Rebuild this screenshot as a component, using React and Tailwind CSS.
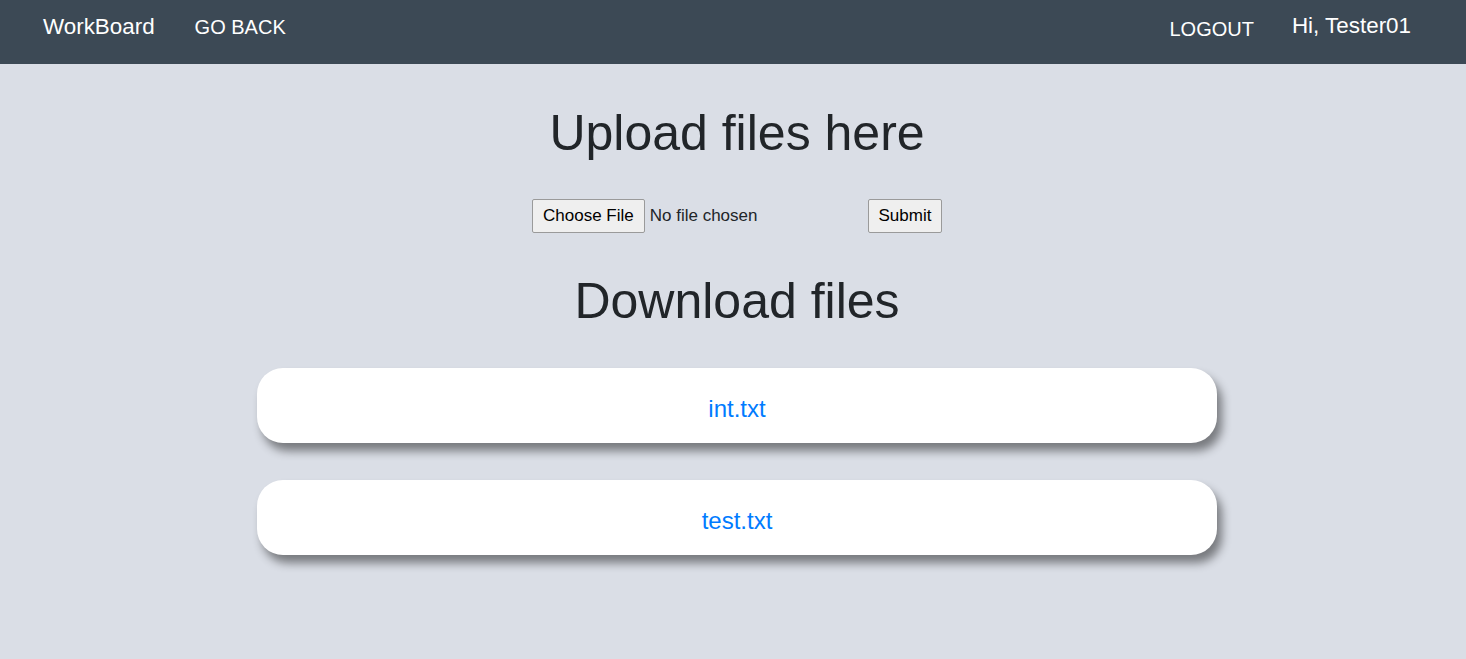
import React from "react";

export default function App() {
  const files = ["int.txt", "test.txt"];
  return (
    <div className="min-h-[659px] bg-[#dadee6] font-['Liberation_Sans',Arial,sans-serif] text-[#212529]">
      <nav className="h-16 bg-[#3c4955] flex items-start justify-between text-white">
        <div className="flex items-center pl-[43px] pt-[11px]">
          <span className="text-[22.4px] leading-[30px]">WorkBoard</span>
          <span className="text-[20px] leading-[30px] ml-[40px] pt-[1px]">GO BACK</span>
        </div>
        <div className="flex items-center pr-[55px] pt-[11px]">
          <span className="text-[20px] leading-[30px] pt-[2px]">LOGOUT</span>
          <span className="text-[22.4px] leading-[30px] ml-[38px] pb-[4px]">Hi, Tester01</span>
        </div>
      </nav>
      <main className="flex flex-col items-center pl-2">
        <h1 className="mt-[39px] text-[50px] leading-[60px] font-normal">Upload files here</h1>
        <form className="mt-[36px] flex items-center text-[17px]" onSubmit={(e) => e.preventDefault()}>
          <div className="w-[336px] flex items-center">
            <span className="h-[34px] px-[10px] flex items-center border border-[#9a9a9a] bg-[#efefef] rounded-[2px] text-black">Choose File</span>
            <span className="ml-[5px]">No file chosen</span>
          </div>
          <button type="submit" className="h-[34px] w-[74px] border border-[#9a9a9a] bg-[#efefef] rounded-[2px] text-black">Submit</button>
        </form>
        <h2 className="mt-[38px] text-[50px] leading-[60px] font-normal">Download files</h2>
        <div className="mt-[37px] flex flex-col gap-[37px]">
          {files.map((f) => (
            <a
              key={f}
              href="#"
              className="w-[960px] h-[75px] bg-white rounded-[26px] flex items-center justify-center text-[24px] text-[#007bff] shadow-[5px_8px_10px_rgba(0,0,0,0.45)]"
            >
              <span className="pt-[6px]">{f}</span>
            </a>
          ))}
        </div>
      </main>
    </div>
  );
}
